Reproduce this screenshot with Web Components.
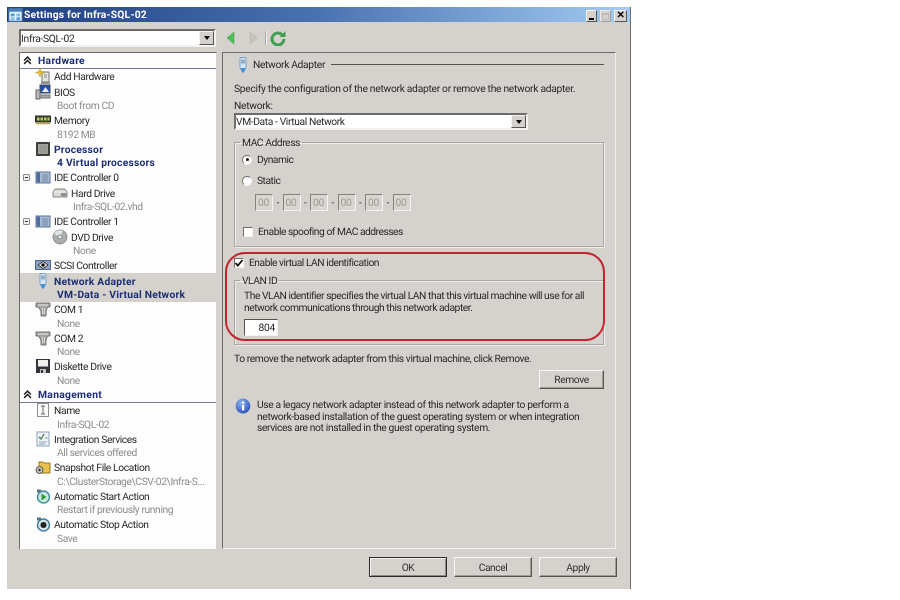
<!DOCTYPE html>
<html>
<head>
<meta charset="utf-8">
<title>Settings for Infra-SQL-02</title>
<style>
  html, body { margin: 0; background: #fff; }
  body { font: 10.3px Roboto, "Liberation Sans", sans-serif; letter-spacing: -.3px; color: #2a2a2a; text-rendering: geometricPrecision; }
</style>
</head>
<body>
<settings-window caption="Settings for Infra-SQL-02">
  <win-combo slot="vm" style="width:197px;height:18px">Infra-SQL-02</win-combo>

  <settings-tree slot="tree">
    <tree-header>Hardware</tree-header>
    <tree-item icon="add">Add Hardware</tree-item>
    <tree-item icon="bios" sub="Boot from CD">BIOS</tree-item>
    <tree-item icon="memory" sub="8192 MB">Memory</tree-item>
    <tree-item icon="cpu" sub="4 Virtual processors" strong>Processor</tree-item>
    <tree-item icon="ide" expander>IDE Controller 0</tree-item>
    <tree-item icon="disk" sub="Infra-SQL-02.vhd" nested>Hard Drive</tree-item>
    <tree-item icon="ide" expander>IDE Controller 1</tree-item>
    <tree-item icon="dvd" sub="None" nested>DVD Drive</tree-item>
    <tree-item icon="scsi">SCSI Controller</tree-item>
    <tree-item icon="nic" sub="VM-Data - Virtual Network" strong selected>Network Adapter</tree-item>
    <tree-item icon="com" sub="None">COM 1</tree-item>
    <tree-item icon="com" sub="None">COM 2</tree-item>
    <tree-item icon="floppy" sub="None">Diskette Drive</tree-item>
    <tree-header>Management</tree-header>
    <tree-item icon="name" sub="Infra-SQL-02">Name</tree-item>
    <tree-item icon="services" sub="All services offered">Integration Services</tree-item>
    <tree-item icon="snapshot" sub="C:\ClusterStorage\CSV-02\Infra-S...">Snapshot File Location</tree-item>
    <tree-item icon="start" sub="Restart if previously running">Automatic Start Action</tree-item>
    <tree-item icon="stop" sub="Save">Automatic Stop Action</tree-item>
  </settings-tree>

  <adapter-panel slot="panel"></adapter-panel>

  <win-button slot="actions" default style="width:78px;height:20px">OK</win-button>
  <win-button slot="actions" style="width:78px;height:20px">Cancel</win-button>
  <win-button slot="actions" style="width:78px;height:20px">Apply</win-button>
</settings-window>

<script>
const ICONS = {
  window: '<rect x="1" y="2" width="14" height="13" fill="#e8f1fa" stroke="#5a7fa8"/><rect x="1" y="2" width="14" height="3" fill="#3f7fc0"/><rect x="3" y="7" width="4" height="3" fill="#4aa0d8"/><rect x="9" y="7" width="4" height="3" fill="#7cc0e8"/><rect x="3" y="11" width="4" height="3" fill="#7cc0e8"/><rect x="9" y="11" width="4" height="3" fill="#4aa0d8"/>',
  add: '<rect x="7" y="4" width="7" height="10" fill="#e4e4e0" stroke="#77786f"/><path d="M6 15h9" stroke="#77786f" stroke-width="1.5"/><path d="M9 7h3M9 9h3" stroke="#8d8d86"/><path d="M5 0l1 3.500 3.500 1-3.500 1-1 3.500-1-3.500L.5 4.500l3.500-1z" fill="#f0c030" stroke="#b88a10" stroke-width=".5"/>',
  bios: '<rect x="5" y="1" width="10" height="8" fill="#1f4fb0" stroke="#44484e"/><path d="M7 8l3.500-5 3.500 5z" fill="#e8eef8"/><rect x="1" y="6" width="4" height="9" fill="#b9b9b2" stroke="#666"/><rect x="6" y="11" width="9" height="3" fill="#a8a8a0" stroke="#777"/>',
  memory: '<rect x=".5" y="4" width="15" height="6" fill="#2c4a2c" stroke="#2c2c2c"/><path d="M2 5.500h2.500v3H2zM5.500 5.500H8v3H5.500zM9 5.500h2.500v3H9zM12.500 5.500H14.500v3h-2z" fill="#c8c060"/><path d="M1 11.500h14" stroke="#c0a030" stroke-width="1.500"/>',
  cpu: '<rect x="1" y="1" width="14" height="14" rx="1" fill="#3d3d3a"/><rect x="3.500" y="3.500" width="9" height="9" fill="#9a9a94" stroke="#c8c8c4" stroke-width=".6"/>',
  ide: '<rect x="1" y="3" width="14" height="11" fill="#a9bcd4" stroke="#5d769a"/><rect x="1.500" y="3.500" width="3.500" height="10" fill="#4d6d9c"/><path d="M7 6h6M7 8h6M7 10h6M7 12h6" stroke="#6f88aa"/>',
  disk: '<path d="M1 7l2-3h10l2 3v5H1z" fill="#d9d9d6" stroke="#85857f"/><ellipse cx="11.500" cy="9.500" rx="3" ry="1.800" fill="#8f8f8a"/><path d="M2 7h12" stroke="#f2f2f0"/>',
  dvd: '<circle cx="8" cy="8" r="7" fill="#aaaeaa" stroke="#8a8c8a"/><path d="M2 5a6.500 6.500 0 0 1 9-3L8 8z" fill="#e0e4e0"/><circle cx="8" cy="8" r="2" fill="#f4f4f4" stroke="#888"/>',
  scsi: '<rect x=".5" y="3.500" width="15" height="9" fill="#8ba2c0" stroke="#51698e"/><path d="M3 8l5-3.500L13 8l-5 3.500z" fill="#f0f2f5" stroke="#333"/><circle cx="8" cy="8" r="1.800" fill="#111"/>',
  nic: '<path d="M5 .5h6v10a3 3 0 0 1-6 0z" fill="#d4e6f6" stroke="#7fa0c0"/><path d="M7 2.500v4M9 2.500v4" stroke="#55708c"/><path d="M5.500 11h5l-1.500 4.500H7z" fill="#4a93d2"/>',
  com: '<path d="M1 2h14v4h-2.500L11 10v5H6v-5L3.500 6H1z" fill="#a4a6a1" stroke="#71736e"/><path d="M3 4h10" stroke="#e6e6e2"/><path d="M7.500 7v6M9.500 7v6" stroke="#d8d8d4"/>',
  floppy: '<path d="M1 1h14v14H1z" fill="#32363c"/><rect x="3" y="2" width="10" height="6.500" fill="#f0f0ee"/><rect x="5" y="11" width="6" height="4" fill="#c4c4c0"/><rect x="6" y="12" width="2" height="3" fill="#32363c"/>',
  name: '<rect x="2.500" y="1.500" width="11" height="13" fill="#fafafa" stroke="#8d8d88"/><path d="M6 4h4M8 4v8M6 12h4" stroke="#66665f" fill="none"/>',
  services: '<rect x="2" y="1" width="12" height="14" fill="#eef2f7" stroke="#8fa3b8"/><path d="M4 6l2 2 3-5" stroke="#3f7f4f" stroke-width="1.300" fill="none"/><path d="M4 11h8M4 13h6M10 7h3" stroke="#8aa0b8"/>',
  snapshot: '<path d="M4 3h4l1 1h6v10H4z" fill="#e8c050" stroke="#94771e"/><circle cx="4.500" cy="11" r="3.500" fill="#c4c4c0" stroke="#55554f"/><circle cx="4.500" cy="11" r="1.200" fill="#333"/>',
  start: '<rect x="2" y="1.500" width="4" height="3" fill="#5f6f7f"/><circle cx="8.500" cy="9" r="6" fill="#cfe6e6" stroke="#3f8e9c" stroke-width="1.500"/><path d="M6.500 5.500l5 3.500-5 3.500z" fill="#2f9a2f"/>',
  stop: '<rect x="2" y="1.500" width="4" height="3" fill="#5f6f7f"/><circle cx="8.500" cy="9" r="6" fill="#d8e4ec" stroke="#3f7e9c" stroke-width="1.500"/><circle cx="8.500" cy="9" r="3" fill="#222"/>',
  info: '<defs><radialGradient id="i" cx=".4" cy=".3" r=".8"><stop offset="0" stop-color="#8fb4f0"/><stop offset="1" stop-color="#1f48b4"/></radialGradient></defs><circle cx="8" cy="8" r="7.400" fill="url(#i)"/><rect x="7" y="6.800" width="2.200" height="5.600" fill="#fff"/><rect x="7" y="3.600" width="2.200" height="2" fill="#fff"/>',
  back: '<path d="M10 2v12L3 8z" fill="#4fbf5a" stroke="#3d9e48" stroke-width=".5"/>',
  forward: '<path d="M5 2v12l7-6z" fill="#c6c4bf" stroke="#b2b0ab" stroke-width=".5"/>',
  refresh: '<path d="M12.500 5A6 6 0 1 0 14 9" fill="none" stroke="#3f9e52" stroke-width="3"/><path d="M15.500 1v6h-6z" fill="#3f9e52"/>',
  chevrons: '<path d="M2 8l6-6 6 6M2 14l6-6 6 6" fill="none" stroke="#222" stroke-width="2.600"/>'
}

class HvIcon extends HTMLElement {
  connectedCallback() {
    const size = this.getAttribute('size') || 16
    this.attachShadow({ mode: 'open' }).innerHTML = `
      <style>
        :host { display: block; width: ${size}px; height: ${size}px; flex: none; }
        svg { display: block; width: 100%; height: 100%; }
      </style>
      <svg viewBox="0 0 16 16">${ICONS[this.getAttribute('name')] || ''}</svg>`
  }
}
customElements.define('hv-icon', HvIcon)

class SettingsWindow extends HTMLElement {
  constructor() {
    super()
    this.attachShadow({ mode: 'open' }).innerHTML = `
      <style>
        :host {
          display: flex; flex-direction: column;
          width: 624px; height: 582px; margin: 7px 0 0 7px;
          box-sizing: border-box; background: #d5d2cd;
          border-right: 1px solid #6f6e6b; filter: blur(.3px);
        }
        .title {
          height: 15px; display: flex; align-items: center; flex: none;
          background: linear-gradient(90deg, #1f3f80, #4a72b0 50%, #a4cbf2);
          color: #fff; font-weight: bold; padding-left: 1px;
        }
        .title span { margin-left: 1px; flex: 1; letter-spacing: .22px; }
        .caps { display: flex; margin-right: 3px; gap: 3px; margin-top: 2px; }
        .cap { width: 11px; height: 12px; box-sizing: border-box; background: #d5d2cd; border: 1px solid;
          border-color: #f4f4f2 #555 #555 #f4f4f2; position: relative; }
        .cap.max { border-color: #e8e8e6 #a0a0a0 #a0a0a0 #e8e8e6; }
        .cap.min::after { content: ''; position: absolute; left: 2px; bottom: 1px; width: 5px; height: 2px; background: #000; }
        .cap.max::after { content: ''; position: absolute; inset: 2px 1px 1px 1px; border: 1px solid #bdbab4; border-top-width: 2px; }
        .cap.close { width: 13px; font: bold 10px/10px "Liberation Sans", sans-serif; color: #000; text-align: center; }
        .main { flex: 1; display: grid; grid-template-columns: 198px 394px; column-gap: 5px;
          grid-template-rows: 18px 497px; row-gap: 5px;
          padding: 7px 0 0 12px; }
        .toolbar { display: flex; align-items: center; padding-left: 2px; }
        .toolbar .sep { width: 1px; height: 14px; margin: 0 4px 0 4px; background: #aaa8a2; box-shadow: 1px 0 #f2f2f0; }
        .actions { flex: none; display: flex; gap: 7px; justify-content: flex-end; padding: 8px 13px 12px 0; }
      </style>
      <div class="title">
        <hv-icon name="window" size="15"></hv-icon>
        <span id="cap"></span>
        <div class="caps">
          <div class="cap min"></div><div class="cap max"></div><div class="cap close">✕</div>
        </div>
      </div>
      <div class="main">
        <slot name="vm"></slot>
        <div class="toolbar">
          <hv-icon name="back"></hv-icon>
          <hv-icon name="forward" style="margin-left:5px"></hv-icon>
          <div class="sep"></div>
          <hv-icon name="refresh"></hv-icon>
        </div>
        <slot name="tree"></slot>
        <slot name="panel"></slot>
      </div>
      <div class="actions"><slot name="actions"></slot></div>`
  }
  connectedCallback() {
    this.shadowRoot.getElementById('cap').textContent = this.getAttribute('caption')
  }
}
customElements.define('settings-window', SettingsWindow)

class WinCombo extends HTMLElement {
  constructor() {
    super()
    this.attachShadow({ mode: 'open' }).innerHTML = `
      <style>
        :host { display: flex; box-sizing: border-box; background: #fff; align-items: center;
          border: 2px solid; border-color: #6d6c69 #f2f2f0 #f2f2f0 #6d6c69; padding-left: 0; }
        .text { flex: 1; }
        .btn { width: 15px; align-self: stretch; background: #d5d2cd; display: flex; align-items: center; justify-content: center;
          box-sizing: border-box; border: 1px solid; border-color: #f4f4f2 #555 #555 #f4f4f2; }
        .btn::after { content: ''; border: 3.5px solid transparent; border-top: 4px solid #000; border-bottom: 0; }
      </style>
      <div class="text"><slot></slot></div><div class="btn"></div>`
  }
}
customElements.define('win-combo', WinCombo)

class WinButton extends HTMLElement {
  constructor() {
    super()
    this.attachShadow({ mode: 'open' }).innerHTML = `
      <style>
        :host { display: flex; align-items: center; justify-content: center; box-sizing: border-box; letter-spacing: -.45px;
          background: #d5d2cd; border: 1px solid; border-color: #f6f6f4 #55544f #55544f #f6f6f4; color: #333;
          box-shadow: inset -1px -1px #a09e98; }
        :host([default]) { border: 1px solid #2e2d2a; box-shadow: inset 1px 1px #f6f6f4, inset -1px -1px #8a8883; }
      </style>
      <slot></slot>`
  }
}
customElements.define('win-button', WinButton)

class SettingsTree extends HTMLElement {
  constructor() {
    super()
    this.attachShadow({ mode: 'open' }).innerHTML = `
      <style>
        :host { display: block; box-sizing: border-box; background: #fdfdfe; overflow: hidden; letter-spacing: -.4px;
          border: 1px solid; border-width: 1px 1px 0 1px; border-color: #6d6c69 #d5d2cd #6d6c69 #6d6c69; height: 497px; }
      </style>
      <slot></slot>`
  }
}
customElements.define('settings-tree', SettingsTree)

class TreeHeader extends HTMLElement {
  constructor() {
    super()
    this.attachShadow({ mode: 'open' }).innerHTML = `
      <style>
        :host { display: flex; align-items: center; height: 15.5px; box-sizing: border-box; padding-top: 1px;
          border-bottom: 1px solid #747d92; color: #1d2f74; font-weight: bold; padding-left: 3px; }
        span { margin-left: 6px; letter-spacing: .3px; }
      </style>
      <hv-icon name="chevrons" size="9"></hv-icon><span><slot></slot></span>`
  }
}
customElements.define('tree-header', TreeHeader)

class TreeItem extends HTMLElement {
  connectedCallback() {
    const sub = this.getAttribute('sub')
    this.attachShadow({ mode: 'open' }).innerHTML = `
      <style>
        :host { display: block; box-sizing: border-box; height: ${sub ? 28.5 : 15.5}px; position: relative; }
        :host([selected]) { background: #d5d2cd; }
        :host([strong]) { color: #1d2f74; font-weight: bold; }
        :host([strong]) .label, :host([strong]) .sub { letter-spacing: .22px; }
        .row { display: flex; align-items: center; height: 15px; padding-left: 15px; }
        :host([nested]) .row { padding-left: 32px; }
        .label { margin: 1px 0 0 3px; }
        .sub { color: #8e8e8e; padding-left: 37px; line-height: 13px; white-space: nowrap; }
        :host([strong]) .sub { color: #1d2f74; padding-left: 37px; }
        :host([nested]) .sub { padding-left: 53px; }
        .exp { position: absolute; left: 3px; top: 4px; width: 7px; height: 7px; box-sizing: border-box;
          border: 1px solid #8b8b8b; border-radius: 1px; background: #f0f0f0; }
        .exp::after { content: ''; position: absolute; left: 1px; top: 2px; width: 3px; height: 1px; background: #333; }
      </style>
      ${this.hasAttribute('expander') ? '<div class="exp"></div>' : ''}
      <div class="row">
        <hv-icon name="${this.getAttribute('icon')}"></hv-icon>
        <div class="label"><slot></slot></div>
      </div>
      ${sub ? `<div class="sub">${sub}</div>` : ''}`
  }
}
customElements.define('tree-item', TreeItem)

class WinGroup extends HTMLElement {
  connectedCallback() {
    this.attachShadow({ mode: 'open' }).innerHTML = `
      <style>
        :host { display: block; flex: none; }
        fieldset { margin: 0; padding: 0; height: 100%; box-sizing: border-box; min-width: 0;
          border: 1px solid #a7a5a0; box-shadow: 1px 1px #eeeeec, inset 1px 1px #eeeeec; }
        legend { padding: 0 2px; margin-left: 5px; line-height: 13px; letter-spacing: -.45px; }
      </style>
      <fieldset><legend>${this.getAttribute('legend')}</legend><slot></slot></fieldset>`
  }
}
customElements.define('win-group', WinGroup)

class WinOption extends HTMLElement {
  connectedCallback() {
    const kind = this.getAttribute('kind')
    const mark = kind === 'check' ? (this.hasAttribute('checked')
      ? '<svg viewBox="0 0 10 10"><path d="M1.5 5l2.3 2.6L8.5 2" fill="none" stroke="#111" stroke-width="1.8"/></svg>' : '') : ''
    this.attachShadow({ mode: 'open' }).innerHTML = `
      <style>
        :host { display: flex; align-items: center; height: 13px; flex: none; letter-spacing: -.5px; }
        .box { width: 10px; height: 10px; flex: none; box-sizing: border-box; background: #fff; position: relative;
          border: 1px solid; border-color: #6d6c69 #f2f2f0 #f2f2f0 #6d6c69; }
        .radio { border-radius: 50%; }
        :host([checked]) .radio::after { content: ''; position: absolute; left: 2.5px; top: 2.5px; width: 3px; height: 3px; border-radius: 50%; background: #111; }
        svg { display: block; position: absolute; inset: -1px; width: 10px; height: 10px; }
        span { margin-left: 5px; }
      </style>
      <div class="box ${kind === 'radio' ? 'radio' : ''}">${mark}</div><span><slot></slot></span>`
  }
}
customElements.define('win-option', WinOption)

class AdapterPanel extends HTMLElement {
  constructor() {
    super()
    const octets = Array(6).fill('<div class="octet">00</div>').join('<span class="dash">-</span>')
    this.attachShadow({ mode: 'open' }).innerHTML = `
      <style>
        :host { display: flex; flex-direction: column; box-sizing: border-box; height: 497px; width: 394px;
          position: relative; padding: 4px 11px 0 11px;
          border: 1px solid; border-color: #6d6c69 #f0f0ee #f0f0ee #6d6c69; }
        p { margin: 0; line-height: 13px; flex: none; }
        .head { display: flex; align-items: center; height: 15px; margin-left: 1px; flex: none; }
        .head span { margin: 0 6px 0 2px; letter-spacing: -.35px; }
        .head i { flex: 1; height: 1px; background: #55544f; margin-right: 0; }
        .indent { margin-left: 7px; }
        .octets { display: flex; align-items: center; margin: 7px 0 0 20px; color: #9c9a95; }
        .octet { width: 18px; height: 17px; box-sizing: border-box; padding-left: 2px; line-height: 15px;
          background: #d9d6d1; border: 1px solid; border-color: #85837e #f2f2f0 #f2f2f0 #85837e; }
        .dash { width: 9.5px; text-align: center; color: #333; }
        .vlan { line-height: 12px; margin: 3px 8px 0 9px; letter-spacing: -.47px; }
        .num { width: 34px; height: 17px; box-sizing: border-box; margin: 5px 0 0 9px; background: #fff; text-align: right;
          padding-right: 2px; line-height: 15px; border: 1px solid; border-color: #55544f #f2f2f0 #f2f2f0 #55544f; }
        .info { display: flex; margin: 9px 0 0 1px; flex: none; letter-spacing: -.37px; }
        .info div { margin-left: 6px; line-height: 11.6px; width: 345px; padding-top: 1px; }
        .ring { position: absolute; left: 2px; top: 199px; width: 376px; height: 85px;
          border: 2px solid #c4242f; border-radius: 20px; pointer-events: none; }
      </style>
      <div class="head"><hv-icon name="nic"></hv-icon><span>Network Adapter</span><i></i></div>
      <p style="margin-top:10px">Specify the configuration of the network adapter or remove the network adapter.</p>
      <p style="margin-top:4px">Network:</p>
      <win-combo style="width:294px;height:17px;margin-top:1px;flex:none;letter-spacing:-.4px">VM-Data - Virtual Network</win-combo>
      <win-group legend="MAC Address" style="height:111px;margin-top:6px">
        <win-option class="indent" kind="radio" checked style="margin-top:4px">Dynamic</win-option>
        <win-option class="indent" kind="radio" style="margin-top:8px">Static</win-option>
        <div class="octets">${octets}</div>
        <win-option class="indent" kind="check" style="margin-top:14px;margin-left:8px">Enable spoofing of MAC addresses</win-option>
      </win-group>
      <win-option kind="check" checked style="margin-top:9px">Enable virtual LAN identification</win-option>
      <win-group legend="VLAN ID" style="height:71px;margin-top:5px">
        <p class="vlan">The VLAN identifier specifies the virtual LAN that this virtual machine will use for all network communications through this network adapter.</p>
        <div class="num">804</div>
      </win-group>
      <p style="margin-top:7px;letter-spacing:-.42px">To remove the network adapter from this virtual machine, click Remove.</p>
      <win-button style="width:65px;height:19px;margin-top:5px;align-self:flex-end;flex:none">Remove</win-button>
      <div class="info"><hv-icon name="info"></hv-icon><div>Use a legacy network adapter instead of this network adapter to perform a network-based installation of the guest operating system or when integration services are not installed in the guest operating system.</div></div>
      <div class="ring"></div>`
  }
}
customElements.define('adapter-panel', AdapterPanel)
</script>
</body>
</html>
